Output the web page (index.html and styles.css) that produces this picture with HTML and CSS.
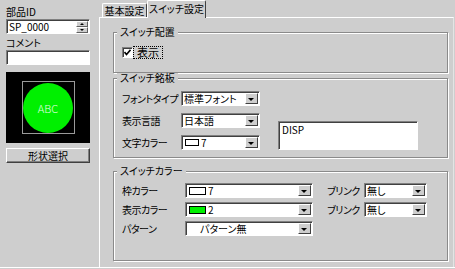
FILE: index.html
```html
<!DOCTYPE html>
<html lang="ja">
<head>
  <meta charset="UTF-8">
  <title>スイッチ設定</title>
  <link rel="stylesheet" href="styles.css">
</head>
<body>

<div class="window">
  <!-- Parts list side -->
  <aside class="side">
    <div class="lbl">部品ID</div>
    <div class="field">
      <span class="val">SP_0000</span>
      <span class="spinner"><i class="up"></i><i class="down"></i></span>
    </div>
    <div class="lbl lbl-2">コメント</div>
    <div class="field"></div>

    <div class="preview">
      <div class="frame">
        <div class="lamp">ABC</div>
      </div>
    </div>
    <div class="btn">形状選択</div>
  </aside>

  <!-- Tabbed settings -->
  <main class="main">
    <div class="tabs">
      <div class="tab">基本設定</div>
      <div class="tab active">スイッチ設定</div>
    </div>

    <div class="panel">
      <fieldset class="group g-place">
        <legend>スイッチ配置</legend>
        <div class="check">
          <span class="box">
            <svg width="7" height="7" viewBox="0 0 7 7"><path d="M0.5 3 L2.5 5.5 L6.5 0.8" fill="none" stroke="#000" stroke-width="1.6"/></svg>
          </span>
          <span class="focus">表示</span>
        </div>
      </fieldset>

      <fieldset class="group g-plate">
        <legend>スイッチ銘板</legend>
        <div class="plate-grid">
          <span class="cap">フォントタイプ</span>
          <div class="combo"><span class="txt">標準フォント</span><span class="arrow"></span></div>

          <span class="cap">表示言語</span>
          <div class="combo"><span class="txt">日本語</span><span class="arrow"></span></div>

          <span class="cap">文字カラー</span>
          <div class="combo"><span class="txt"><i class="sw"></i>7</span><span class="arrow"></span></div>

          <div class="memo">DISP</div>
        </div>
      </fieldset>

      <fieldset class="group g-color">
        <legend>スイッチカラー</legend>
        <div class="color-grid">
          <span class="cap">枠カラー</span>
          <div class="combo"><span class="txt"><i class="sw sw-wide"></i>7</span><span class="arrow"></span></div>
          <span></span>
          <span class="cap">ブリンク</span>
          <div class="combo"><span class="txt">無し</span><span class="arrow"></span></div>

          <span class="cap">表示カラー</span>
          <div class="combo"><span class="txt"><i class="sw sw-wide sw-green"></i>2</span><span class="arrow"></span></div>
          <span></span>
          <span class="cap">ブリンク</span>
          <div class="combo"><span class="txt">無し</span><span class="arrow"></span></div>

          <span class="cap">パターン</span>
          <div class="combo"><span class="txt txt-indent">パターン無</span><span class="arrow"></span></div>
        </div>
      </fieldset>
    </div>
  </main>
</div>

</body>
</html>
```

FILE: styles.css
```css
/* General */
body {
  margin: 0;
  background-color: #cecece;
  font-family: "Noto Sans CJK JP", sans-serif;
  font-size: 10px;
  font-feature-settings: "palt";
  color: #000;
}

.window {
  display: flex;
  height: 267px;
  border-bottom: 1px solid #fff;
}

/* Left side */
.side {
  width: 99px;
  box-sizing: border-box;
  padding: 0 9px 0 6px;
}

.lbl {
  padding-top: 4px;
  line-height: 15px;
}

.lbl-2 {
  padding-top: 2px;
  line-height: 14px;
}

.field {
  display: flex;
  height: 15px;
  box-sizing: border-box;
  background: #fff;
  border: 1px solid;
  border-color: #808080 #fff #fff #808080;
  box-shadow: inset 1px 1px 0 #404040;
}

.field .val {
  flex: 1;
  padding-left: 2px;
  line-height: 13px;
}

.spinner {
  display: flex;
  flex-direction: column;
  width: 12px;
  margin: 1px 1px 0 0;
}

.spinner i {
  flex: 1;
  position: relative;
  background: #cecece;
  border: 1px solid;
  border-color: #fff #606060 #606060 #fff;
}

.spinner i::after {
  content: "";
  position: absolute;
  left: 3px;
  top: 1px;
  border-left: 2px solid transparent;
  border-right: 2px solid transparent;
}

.spinner .up::after { border-bottom: 2px solid #000; }
.spinner .down::after { border-top: 2px solid #000; }

.preview {
  display: flex;
  justify-content: center;
  align-items: center;
  height: 71px;
  margin-top: 7px;
  background: #000;
}

.frame {
  display: flex;
  justify-content: center;
  align-items: center;
  width: 53px;
  height: 53px;
  box-sizing: border-box;
  border: 1px solid #9a9a9a;
}

.lamp {
  width: 50px;
  height: 50px;
  flex: none;
  border-radius: 50%;
  background: #00f000;
  color: #e4ffe4;
  font-size: 11px;
  font-weight: 300;
  line-height: 50px;
  text-align: center;
}

.btn {
  height: 15px;
  margin-top: 5px;
  box-sizing: border-box;
  border: 1px solid;
  border-color: #fff #404040 #404040 #fff;
  box-shadow: inset -1px -1px 0 #808080;
  line-height: 13px;
  text-align: center;
}

/* Tabs */
.main {
  flex: 1;
  display: flex;
  flex-direction: column;
}

.tabs {
  display: flex;
  align-items: flex-end;
  height: 17px;
  padding-left: 3px;
}

.tab {
  height: 14px;
  width: 45px;
  box-sizing: border-box;
  border: 1px solid;
  border-color: #fff #404040 transparent #fff;
  border-bottom: none;
  border-radius: 2px 2px 0 0;
  line-height: 13px;
  text-align: center;
}

.tab.active {
  position: relative;
  z-index: 1;
  width: 59px;
  height: 18px;
  margin-bottom: -1px;
  background: #cecece;
  line-height: 15px;
}

.panel {
  flex: 1;
  padding-top: 9px;
  border-top: 1px solid #fff;
  border-left: 1px solid #fff;
  border-right: 1px solid #e4e4e4;
  margin-right: 1px;
}

/* Group boxes */
.group {
  margin: 0 5px 0 13px;
  padding: 0 8px;
  border: 1px solid #8a8a8a;
  box-shadow: inset 1px 1px 0 #fff, 1px 1px 0 #fff;
}

.group legend {
  margin-left: -5px;
  padding: 0 3px;
  line-height: 10px;
  background: #cecece;
}

.g-place { padding-top: 9px; padding-bottom: 13px; }
.g-plate { padding-top: 8px; padding-bottom: 7px; }
.g-color { margin-top: 8px; padding-top: 7px; padding-bottom: 24px; }

.check {
  display: flex;
  align-items: center;
  height: 13px;
}

.check .box {
  display: flex;
  justify-content: center;
  align-items: center;
  width: 11px;
  height: 11px;
  box-sizing: border-box;
  background: #fff;
  border: 1px solid;
  border-color: #808080 #fff #fff #808080;
  box-shadow: inset 1px 1px 0 #404040;
}

.check .focus {
  margin-left: 1px;
  padding: 0 3px;
  font-size: 11px;
  line-height: 11px;
  outline: 1px dotted #000;
}

.cap {
  line-height: 15px;
  white-space: nowrap;
  letter-spacing: -0.5px;
}

.plate-grid {
  display: grid;
  grid-template-columns: 59px 79px 18px 140px;
  grid-template-rows: 15px 15px 15px;
  row-gap: 7px;
}

.plate-grid .cap { grid-column: 1; }
.plate-grid .combo { grid-column: 2; }

.color-grid {
  display: grid;
  grid-template-columns: 63px 128px 14px 37px 63px;
  grid-template-rows: 15px 15px 15px;
  row-gap: 4px;
}

/* Combo boxes */
.combo {
  display: flex;
  box-sizing: border-box;
  background: #fff;
  border: 1px solid;
  border-color: #808080 #fff #fff #808080;
  box-shadow: inset 1px 1px 0 #404040;
}

.combo .txt {
  display: flex;
  align-items: center;
  flex: 1;
  padding-left: 2px;
  line-height: 13px;
  white-space: nowrap;
}

.combo .txt-indent {
  padding-left: 14px;
}

.combo .arrow {
  position: relative;
  width: 11px;
  margin: 1px 1px 1px 0;
  background: #cecece;
  border: 1px solid;
  border-color: #fff #404040 #404040 #fff;
}

.combo .arrow::after {
  content: "";
  position: absolute;
  left: 2px;
  top: 4px;
  border-left: 3px solid transparent;
  border-right: 3px solid transparent;
  border-top: 3px solid #000;
}

.sw {
  width: 14px;
  height: 7px;
  margin: 0 2px 0 1px;
  box-sizing: border-box;
  border: 1px solid #000;
  background: #fff;
}

.sw-wide { width: 17px; height: 8px; }
.sw-green { background: #00f000; }

.memo {
  grid-column: 4;
  grid-row: 2 / 4;
  margin-top: 8px;
  padding: 2px 3px;
  line-height: 11px;
  background: #fff;
  border: 1px solid;
  border-color: #808080 #fff #fff #808080;
  box-shadow: inset 1px 1px 0 #404040;
}
```
